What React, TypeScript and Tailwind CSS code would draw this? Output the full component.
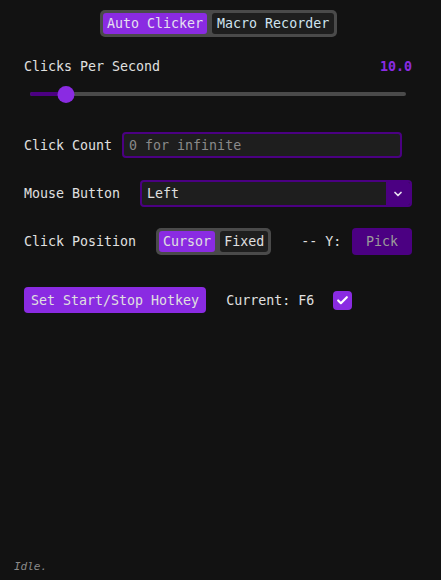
import { ChevronDown, Check } from 'lucide-react'

const MONO = { fontFamily: '"DejaVu Sans Mono", "Liberation Mono", monospace' }

const Tabs = () => (
  <div className="ml-[100px] flex h-[27px] w-fit items-stretch gap-[5px] rounded-[5px] bg-[#4a4a4a] p-[3px]">
    <div className="flex items-center rounded-[3px] bg-[#8a2be2] px-[4px] pt-[1px] text-[#e6e0f0]">Auto Clicker</div>
    <div className="flex items-center rounded-[3px] bg-[#1e1e1e] px-[5px] pt-[1px] text-[#cfe3f0]">Macro Recorder</div>
  </div>
)

const Slider = ({ pct }: { pct: number }) => (
  <div className="relative mx-[6px] mt-[11px] h-[18px]">
    <div className="absolute left-0 right-0 top-[7px] h-[4px] rounded-full bg-[#4a4a4a]" />
    <div className="absolute left-0 top-[7px] h-[4px] rounded-l-full bg-[#4b0082]" style={{ width: `${pct}%` }} />
    <div
      className="absolute top-[0.5px] size-[17px] -translate-x-1/2 rounded-full bg-[#8a2be2]"
      style={{ left: `${pct}%` }}
    />
  </div>
)

export default function App() {
  return (
    <div className="relative h-[580px] w-[441px] bg-[#121212] pt-[10px] text-[13.3px] text-[#e0e0e0]" style={MONO}>
      <Tabs />

      <div className="flex flex-col pl-[24px] pr-[29px]">
        <div className="mt-[21px] flex h-[16px] items-center justify-between pt-[1px] leading-[16px]">
          <span>Clicks Per Second</span>
          <span className="font-semibold text-[#8a2be2]">10.0</span>
        </div>
        <Slider pct={9.6} />

        <div className="mt-[29px] flex h-[26px] items-center gap-[10px]">
          <span className="pt-[1px]">Click Count</span>
          <div className="flex h-full w-[280px] items-center rounded-[4px] border-2 border-[#4b0082] bg-[#1e1e1e] px-[5px] pt-[1px] text-[#8a8a8a]">
            0 for infinite
          </div>
        </div>

        <div className="mt-[22px] flex h-[27px] items-center gap-[20px]">
          <span className="pt-[1px]">Mouse Button</span>
          <div className="flex h-full flex-1 items-stretch overflow-hidden rounded-[4px] border-2 border-[#4b0082] bg-[#1e1e1e]">
            <span className="flex flex-1 items-center px-[5px] pt-[1px]">Left</span>
            <span className="flex w-[24px] items-center justify-center bg-[#4b0082]">
              <ChevronDown size={12} strokeWidth={3.5} color="#e8e0f0" />
            </span>
          </div>
        </div>

        <div className="mt-[21px] flex h-[27px] items-center">
          <span className="pt-[1px]">Click Position</span>
          <div className="ml-[20px] flex h-full items-stretch gap-[5px] rounded-[5px] bg-[#4a4a4a] p-[3px]">
            <div className="flex items-center rounded-[3px] bg-[#8a2be2] px-[4px] pt-[1px]">Cursor</div>
            <div className="flex items-center rounded-[3px] bg-[#1e1e1e] px-[4px] pt-[1px]">Fixed</div>
          </div>
          <span className="ml-[30px] pt-[1px]">-- Y:</span>
          <button className="ml-auto flex h-full w-[60px] items-center justify-center rounded-[4px] bg-[#4b0082] pt-[1px] text-[#9a9a9a]">
            Pick
          </button>
        </div>

        <div className="mt-[32px] flex h-[26px] items-center">
          <button className="flex h-full items-center rounded-[4px] bg-[#8a2be2] px-[7px] pt-[1px]">Set Start/Stop Hotkey</button>
          <span className="ml-[20px] pt-[1px]">Current: F6</span>
          <span className="ml-[19px] flex size-[19px] items-center justify-center rounded-[4px] bg-[#8a2be2]">
            <Check size={13} strokeWidth={4} color="#ffffff" />
          </span>
        </div>
      </div>

      <div className="absolute bottom-[5px] left-[14px] text-[11px] italic text-[#8a8a8a]">Idle.</div>
    </div>
  )
}
